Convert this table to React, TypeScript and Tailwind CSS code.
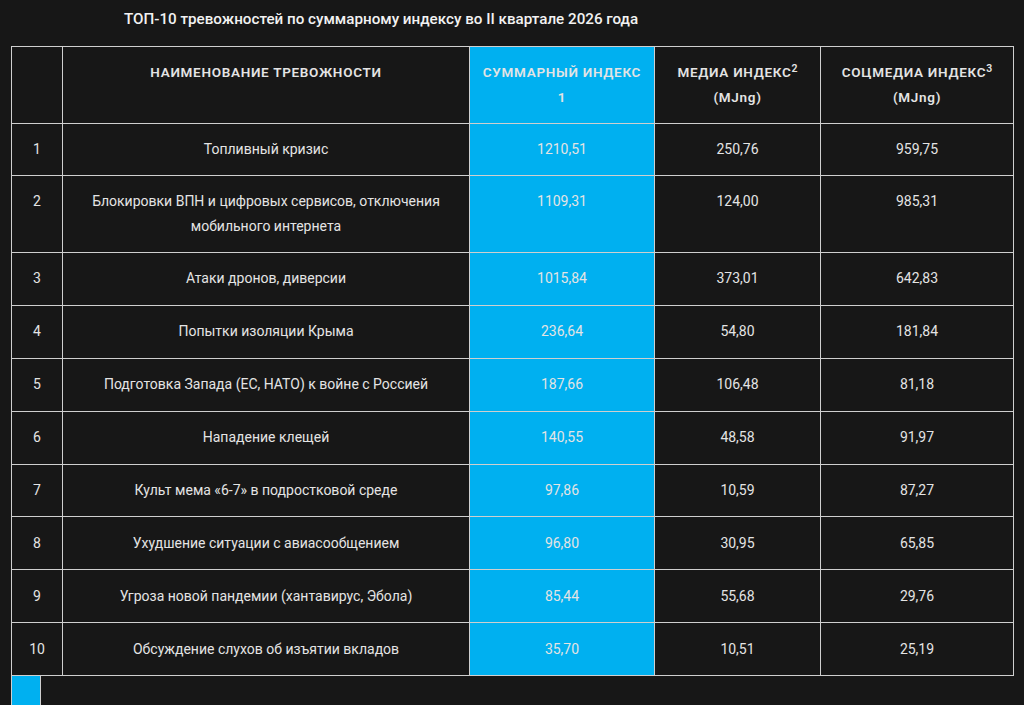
import React from "react";

const rows: [string, string, string, string, string][] = [
  ["1", "Топливный кризис", "1210,51", "250,76", "959,75"],
  ["2", "Блокировки ВПН и цифровых сервисов, отключения мобильного интернета", "1109,31", "124,00", "985,31"],
  ["3", "Атаки дронов, диверсии", "1015,84", "373,01", "642,83"],
  ["4", "Попытки изоляции Крыма", "236,64", "54,80", "181,84"],
  ["5", "Подготовка Запада (ЕС, НАТО) к войне с Россией", "187,66", "106,48", "81,18"],
  ["6", "Нападение клещей", "140,55", "48,58", "91,97"],
  ["7", "Культ мема «6-7» в подростковой среде", "97,86", "10,59", "87,27"],
  ["8", "Ухудшение ситуации с авиасообщением", "96,80", "30,95", "65,85"],
  ["9", "Угроза новой пандемии (хантавирус, Эбола)", "85,44", "55,68", "29,76"],
  ["10", "Обсуждение слухов об изъятии вкладов", "35,70", "10,51", "25,19"],
];

const base = "border border-[#cfcfcf] align-top text-center leading-[25px]";
const head = `${base} py-[13px] font-semibold tracking-[0.7px] text-[13.5px]`;

export default function App() {
  return (
    <div
      className="min-h-[705px] w-[1024px] bg-[#171717] text-[#e4e4e4] overflow-hidden"
      style={{ fontFamily: 'Roboto, "Open Sans", sans-serif' }}
    >
      <div className="h-[46px] pl-[124px] pt-[8px] text-[15.2px] leading-[22px] font-medium text-[#f2f2f2]">
        ТОП-10 тревожностей по суммарному индексу во II квартале 2026 года
      </div>
      <div className="pl-[11px]">
        <table className="border-collapse table-fixed w-[1002px] text-[14px]">
          <colgroup>
            <col className="w-[51px]" />
            <col className="w-[407px]" />
            <col className="w-[185px]" />
            <col className="w-[166px]" />
            <col className="w-[193px]" />
          </colgroup>
          <thead>
            <tr>
              <th className={head}></th>
              <th className={`${head} px-[20px]`}>НАИМЕНОВАНИЕ ТРЕВОЖНОСТИ</th>
              <th className={`${head} bg-[#00b0f0] px-[8px]`}>
                СУММАРНЫЙ ИНДЕКС
                <br />1
              </th>
              <th className={`${head} px-[8px]`}>
                МЕДИА ИНДЕКС<sup className="text-[10.5px] tracking-normal">2</sup>
                <br />(MJng)
              </th>
              <th className={`${head} px-[8px]`}>
                СОЦМЕДИА ИНДЕКС<sup className="text-[10.5px] tracking-normal">3</sup>
                <br />(MJng)
              </th>
            </tr>
          </thead>
          <tbody>
            {rows.map((r, i) => {
              const py = i < 2 ? "py-[13px]" : "py-[13.44px]";
              const c = `${base} ${py}`;
              return (
                <tr key={r[0]}>
                  <td className={`${c} px-[4px]`}>{r[0]}</td>
                  <td className={`${c} px-[24px]`}>{r[1]}</td>
                  <td className={`${c} px-[8px] bg-[#00b0f0]`}>{r[2]}</td>
                  <td className={`${c} px-[8px]`}>{r[3]}</td>
                  <td className={`${c} px-[8px]`}>{r[4]}</td>
                </tr>
              );
            })}
          </tbody>
        </table>
        <div className="flex">
          <div className="h-[30px] w-[30px] bg-[#00b0f0] border-l border-r border-[#cfcfcf]" />
        </div>
      </div>
    </div>
  );
}
